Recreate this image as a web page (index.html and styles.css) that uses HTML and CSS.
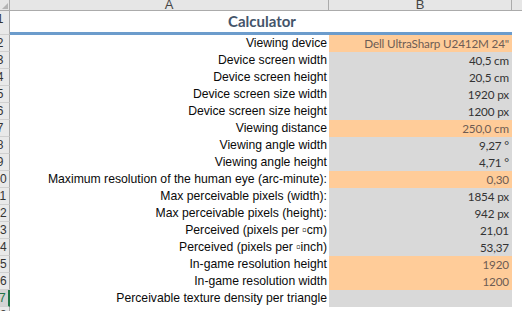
FILE: index.html
```html
<!DOCTYPE html>
<html>
<head>
<meta charset="utf-8">
<link rel="stylesheet" href="styles.css">
</head>
<body>
<div class="sheet">
  <div class="colhead">
    <div class="corner"><span class="tri"></span></div>
    <div class="ch ch-a"><span>A</span></div>
    <div class="ch ch-b"><span>B</span></div>
    <div class="ch ch-c"></div>
  </div>

  <div class="row title-row">
    <div class="rh"><span>1</span></div>
    <div class="title">Calculator</div>
  </div>

  <div class="row"><div class="rh"><span>2</span></div><div class="lab">Viewing device</div><div class="val in">Dell UltraSharp U2412M 24"</div></div>
  <div class="row"><div class="rh"><span>3</span></div><div class="lab">Device screen width</div><div class="val">40,5 cm</div></div>
  <div class="row"><div class="rh"><span>4</span></div><div class="lab">Device screen height</div><div class="val">20,5 cm</div></div>
  <div class="row"><div class="rh"><span>5</span></div><div class="lab">Device screen size width</div><div class="val">1920 px</div></div>
  <div class="row"><div class="rh"><span>6</span></div><div class="lab">Device screen size height</div><div class="val">1200 px</div></div>
  <div class="row"><div class="rh"><span>7</span></div><div class="lab">Viewing distance</div><div class="val in">250,0 cm</div></div>
  <div class="row"><div class="rh"><span>8</span></div><div class="lab">Viewing angle width</div><div class="val">9,27 °</div></div>
  <div class="row"><div class="rh"><span>9</span></div><div class="lab">Viewing angle height</div><div class="val">4,71 °</div></div>
  <div class="row"><div class="rh"><span>10</span></div><div class="lab">Maximum resolution of the human eye (arc-minute):</div><div class="val in">0,30</div></div>
  <div class="row"><div class="rh"><span>11</span></div><div class="lab">Max perceivable pixels (width):</div><div class="val">1854 px</div></div>
  <div class="row"><div class="rh"><span>12</span></div><div class="lab">Max perceivable pixels (height):</div><div class="val">942 px</div></div>
  <div class="row"><div class="rh"><span>13</span></div><div class="lab">Perceived (pixels per ▫cm)</div><div class="val">21,01</div></div>
  <div class="row"><div class="rh"><span>14</span></div><div class="lab">Perceived (pixels per ▫inch)</div><div class="val">53,37</div></div>
  <div class="row"><div class="rh"><span>15</span></div><div class="lab">In-game resolution height</div><div class="val in">1920</div></div>
  <div class="row"><div class="rh"><span>16</span></div><div class="lab">In-game resolution width</div><div class="val in">1200</div></div>
  <div class="row"><div class="rh sel"><span>17</span></div><div class="lab">Perceivable texture density per triangle</div><div class="val"></div></div>
  <div class="row"><div class="rh"><span>18</span></div><div class="lab"></div><div class="blank"></div></div>
</div>
</body>
</html>
```

FILE: styles.css
```css
html, body {
  margin: 0;
  padding: 0;
  background: #ffffff;
  width: 522px;
  height: 311px;
  overflow: hidden;
}

.sheet {
  display: flex;
  flex-direction: column;
  font-family: "Liberation Sans", Arial, sans-serif;
}

.colhead {
  display: grid;
  grid-template-columns: 10px 319px 183px 1fr;
  height: 11px;
  background: #e6e6e6;
  border-bottom: 1px solid #ababab;
  box-sizing: border-box;
}

.corner {
  position: relative;
  border-right: 1px solid #ababab;
  background: #e6e6e6;
}

.tri {
  position: absolute;
  right: 1px;
  bottom: 1px;
  width: 0;
  height: 0;
  border-left: 6px solid transparent;
  border-bottom: 6px solid #b4b4b4;
}

.ch {
  border-right: 1px solid #ababab;
  display: flex;
  justify-content: center;
  align-items: flex-end;
  overflow: hidden;
  color: #444444;
  font-size: 13px;
  line-height: 13px;
}

.ch span {
  margin-bottom: -1px;
}

.ch-c {
  border-right: none;
}

.row {
  display: grid;
  grid-template-columns: 10px 319px 183px 1fr;
  height: 17px;
  font-size: 12.2px;
  line-height: 17px;
}

.rh {
  width: 9px;
  border-right: 1px solid #ababab;
  border-bottom: 1px solid #d0d0d0;
  background: #e9e9e9;
  overflow: hidden;
  position: relative;
  box-sizing: content-box;
  height: 16px;
  color: #333333;
}

.rh span {
  display: block;
  width: 20px;
  margin-left: -10px;
  text-align: center;
  font-size: 12px;
  line-height: 16px;
}

.rh.sel {
  background: #d4d4d4;
  border-right: 2px solid #217346;
  width: 8px;
  color: #217346;
}

.rh.sel span {
  margin-left: -11px;
}

.title-row {
  height: 24px;
}

.title-row .rh {
  height: 23px;
}

.title {
  grid-column: 2 / 4;
  text-align: center;
  font-family: Lato, "Liberation Sans", sans-serif;
  font-weight: 700;
  font-size: 15px;
  line-height: 21px;
  color: #44546a;
  border-bottom: 3px solid #6c9ccc;
  padding-left: 2px;
}

.lab {
  text-align: right;
  padding-right: 2px;
  color: #0a0a0a;
  white-space: nowrap;
}

.val {
  text-align: right;
  padding-right: 3px;
  background: #d9d9d9;
  font-family: Lato, "Liberation Sans", sans-serif;
  font-size: 11.7px;
  letter-spacing: -0.15px;
  color: #333333;
  white-space: nowrap;
}

.val.in {
  background: #ffcc99;
  color: #6e5c54;
}
```
